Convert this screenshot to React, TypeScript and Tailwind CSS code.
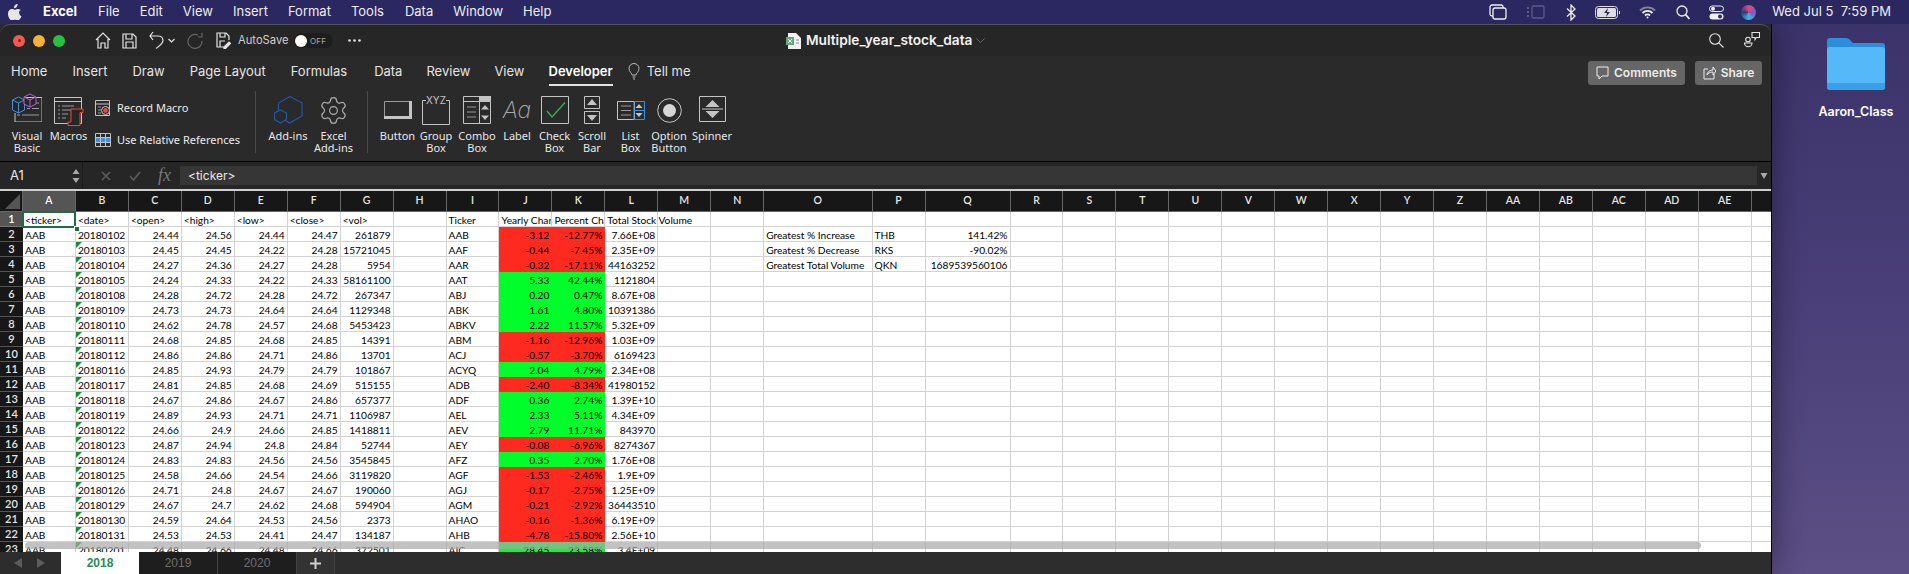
import React from "react";
import { Settings } from "lucide-react";

const UI = "font-['Inter','Liberation_Sans',sans-serif]";
const cols = [
  "A","B","C","D","E","F","G","H","I","J","K","L","M","N","O","P","Q","R","S","T","U","V","W","X","Y","Z","AA","AB","AC","AD","AE","",
];
const stock = `AAB|20180102|24.44|24.56|24.44|24.47|261879
AAB|20180103|24.45|24.45|24.22|24.28|15721045
AAB|20180104|24.27|24.36|24.27|24.28|5954
AAB|20180105|24.24|24.33|24.22|24.33|58161100
AAB|20180108|24.28|24.72|24.28|24.72|267347
AAB|20180109|24.73|24.73|24.64|24.64|1129348
AAB|20180110|24.62|24.78|24.57|24.68|5453423
AAB|20180111|24.68|24.85|24.68|24.85|14391
AAB|20180112|24.86|24.86|24.71|24.86|13701
AAB|20180116|24.85|24.93|24.79|24.79|101867
AAB|20180117|24.81|24.85|24.68|24.69|515155
AAB|20180118|24.67|24.86|24.67|24.86|657377
AAB|20180119|24.89|24.93|24.71|24.71|1106987
AAB|20180122|24.66|24.9|24.66|24.85|1418811
AAB|20180123|24.87|24.94|24.8|24.84|52744
AAB|20180124|24.83|24.83|24.56|24.56|3545845
AAB|20180125|24.58|24.66|24.54|24.66|3119820
AAB|20180126|24.71|24.8|24.67|24.67|190060
AAB|20180129|24.67|24.7|24.62|24.68|594904
AAB|20180130|24.59|24.64|24.53|24.56|2373
AAB|20180131|24.53|24.53|24.41|24.47|134187
AAB|20180201|24.48|24.66|24.48|24.66|372501`.split("\n").map((r) => r.split("|"));
const summary = `AAB|-3.12|-12.77%|7.66E+08
AAF|-0.44|-7.45%|2.35E+09
AAR|-0.32|-17.11%|44163252
AAT|5.33|42.44%|1121804
ABJ|0.20|0.47%|8.67E+08
ABK|1.61|4.80%|10391386
ABKV|2.22|11.57%|5.32E+09
ABM|-1.16|-12.96%|1.03E+09
ACJ|-0.57|-3.70%|6169423
ACYQ|2.04|4.79%|2.34E+08
ADB|-2.40|-8.34%|41980152
ADF|0.36|2.74%|1.39E+10
AEL|2.33|5.11%|4.34E+09
AEV|2.79|11.71%|843970
AEY|-0.08|-6.96%|8274367
AFZ|0.35|2.70%|1.76E+08
AGF|-1.53|-2.46%|1.9E+09
AGJ|-0.17|-2.75%|1.25E+09
AGM|-0.21|-2.92%|36443510
AHAO|-0.16|-1.36%|6.19E+09
AHB|-4.78|-15.80%|2.56E+10
AIC|28.45|23.58%|3.4E+09`.split("\n").map((r) => r.split("|"));
const extra: Record<number, string[]> = {
  0: ["Greatest % Increase", "THB", "141.42%"],
  1: ["Greatest % Decrease", "RKS", "-90.02%"],
  2: ["Greatest Total Volume", "QKN", "1689539560106"],
};

const Cell = ({ children, right, bg, visible }: { children?: React.ReactNode; right?: boolean; bg?: string; visible?: boolean }) => (
  <div
    className={`relative border-r border-b border-[#d2d2d2] px-[2px] leading-[16px] whitespace-nowrap ${visible ? "overflow-visible" : "overflow-hidden"} ${right ? "text-right" : "text-left"} ${bg ?? "bg-white"}`}
  >
    {children}
  </div>
);

function Sheet() {
  const rows: React.ReactNode[] = [];
  const first = ["<ticker>", "<date>", "<open>", "<high>", "<low>", "<close>", "<vol>", "", "Ticker", "Yearly Change", "Percent Change", "Total Stock Volume"];
  rows.push(
    <div key="r1" className="flex items-center justify-center border-b border-[#777] bg-[#555] text-[11px] font-semibold text-white">1</div>
  );
  first.forEach((t, i) =>
    rows.push(
      <Cell key={`h${i}`} visible={i === 11}>
        {i === 11 ? <span className="relative z-10">{t}</span> : t}
      </Cell>
    )
  );
  for (let i = first.length; i < cols.length; i++) rows.push(<Cell key={`h${i}`} />);
  for (let r = 0; r < 22; r++) {
    const s = stock[r];
    const m = summary[r];
    const neg = m[1].startsWith("-");
    const fill = neg ? "bg-[#ff2a1f]" : "bg-[#00ff2a]";
    rows.push(
      <div key={`rh${r}`} className="flex items-center justify-center border-b border-[#555] bg-[#171717] text-[11px] font-semibold text-[#e6e6e6]">{r + 2}</div>
    );
    rows.push(<Cell key={`a${r}`}>{s[0]}</Cell>);
    rows.push(
      <Cell key={`b${r}`}>
        {r > 0 && <span className="absolute left-0 top-0 h-0 w-0 border-t-[6px] border-r-[6px] border-t-[#0f8f3a] border-r-transparent" />}
        {s[1]}
      </Cell>
    );
    for (let c = 2; c < 7; c++) rows.push(<Cell key={`c${r}${c}`} right>{s[c]}</Cell>);
    rows.push(<Cell key={`h${r}`} />);
    rows.push(<Cell key={`i${r}`}>{m[0]}</Cell>);
    rows.push(<Cell key={`j${r}`} right bg={`${fill} border-r-transparent border-b-transparent`}>{m[1]}</Cell>);
    rows.push(<Cell key={`k${r}`} right bg={`${fill} border-r-transparent border-b-transparent`}>{m[2]}</Cell>);
    rows.push(<Cell key={`l${r}`} right>{m[3]}</Cell>);
    rows.push(<Cell key={`m${r}`} />);
    rows.push(<Cell key={`n${r}`} />);
    const e = extra[r];
    rows.push(<Cell key={`o${r}`}>{e?.[0]}</Cell>);
    rows.push(<Cell key={`p${r}`}>{e?.[1]}</Cell>);
    rows.push(<Cell key={`q${r}`} right>{e?.[2]}</Cell>);
    for (let c = 17; c < cols.length; c++) rows.push(<Cell key={`x${r}${c}`} />);
  }
  return (
    <div className="relative h-[361px] overflow-hidden bg-white">
      <div className="grid grid-cols-[23px_repeat(14,52.95px)_108.4px_53px_85px_repeat(14,52.95px)_20px] grid-rows-[21px_repeat(23,15px)] font-['Lato','Liberation_Sans',sans-serif] text-[10.2px] text-black">
        <div className="relative border-r border-b border-[#666] bg-[#171717]">
          <span className="absolute bottom-[2px] right-[2px] h-0 w-0 border-b-[15px] border-l-[15px] border-b-[#555] border-l-transparent" />
        </div>
        {cols.map((c, i) => (
          <div
            key={i}
            className={`flex items-center justify-center border-r border-b border-[#666] text-[10.5px] font-semibold ${i === 0 ? "bg-[#555] text-white" : "bg-[#171717] text-[#e6e6e6]"}`}
          >
            {c}
          </div>
        ))}
        {rows}
      </div>
      {/* selected cell */}
      <div className="absolute left-[22px] top-[20px] h-[17px] w-[54px] border-2 border-[#1f6b42]" />
      <div className="absolute left-[74px] top-[35px] h-[6px] w-[6px] border border-white bg-[#1f6b42]" />
      {/* scrollbar */}
      <div className="absolute left-[25px] top-[351px] h-[7px] w-[1676px] rounded-full bg-[#a8a8a8]/70" />
    </div>
  );
}

const Ico = ({ children, w = 30, h = 30, className = "" }: { children: React.ReactNode; w?: number; h?: number; className?: string }) => (
  <svg width={w} height={h} viewBox={`0 0 ${w} ${h}`} fill="none" stroke="currentColor" className={className}>
    {children}
  </svg>
);

const RibbonItem = ({ w, label, icon }: { w: string; label: React.ReactNode; icon: React.ReactNode }) => (
  <div className={`flex shrink-0 flex-col items-center ${w}`}>
    <div className="flex h-[45px] items-center justify-center pt-[5px]">{icon}</div>
    <div className="text-center text-[11px] leading-[12px] text-[#e8e8e8]">{label}</div>
  </div>
);

const Sep = () => <div className="mx-[10px] mt-[6px] h-[62px] w-px shrink-0 bg-[#4a4a4a]" />;

function Ribbon() {
  const c = "#c4c4c4";
  return (
    <div className="flex h-[76px] pl-[5px] text-[#d0d0d0]">
      <RibbonItem
        w="w-[44px]"
        label={<>Visual<br />Basic</>}
        icon={
          <Ico h={29} className="-mt-[5px]">
            <path d="M13 4.500h17v24.500H3V20" stroke={c} />
            <path d="M15 10h12M15 15.500h3M20 15.500h7M5 22h3M10 22h17" stroke="#9c9c9c" />
            <path d="M.5 7l6-3 6 3v10l-6 3-6-3zM.5 7l6 3 6-3M6.500 10v10" stroke="#3f8fe0" fill="#262626" />
            <path d="M12 4l6-3 6 3v7l-6 3-6-3zM12 4l6 3 6-3M18 7v7" stroke="#b45fd0" fill="#262626" />
          </Ico>
        }
      />
      <RibbonItem
        w="w-[39px]"
        label="Macros"
        icon={
          <Ico h={29} className="mt-[3px]">
            <path d="M.5.500h27v26H.500zM.500 4.500h27" stroke={c} />
            <path d="M4 9h2M8 9h12M4 13h2M8 13h10M4 17h2M8 17h6M4 21h2M8 21h4" stroke="#9a9a9a" />
            <path d="M17 12h12v3.500h-3V28.500H14v-3.500h3z" stroke="#e5483f" fill="#262626" />
          </Ico>
        }
      />
      <div className="ml-[7px] flex w-[150px] shrink-0 flex-col gap-[16px] pt-[15px] text-[11px] text-[#ececec]">
        <div className="flex h-[16px] items-center gap-[6px]">
          <Ico w={16} h={16}>
            <path d="M.5.500h14v15H.500zM.500 4h14" stroke={c} />
            <path d="M3 7h3M3 10h3M3 13h3" stroke="#999" />
            <circle cx="10.500" cy="10.500" r="4" stroke={c} fill="#262626" />
            <circle cx="10.500" cy="10.500" r="2.400" fill="#e5483f" stroke="none" />
          </Ico>
          <span>Record Macro</span>
        </div>
        <div className="flex h-[16px] items-center gap-[6px]">
          <Ico w={16} h={16}>
            <path d="M1 6h14v4.500H1z" fill="#3f8fe0" stroke="none" />
            <path d="M.5 1.500h15v13H.500zM5.500 1.500v13M10.500 1.500v13M.500 5.500h15M.500 10.500h15" stroke={c} />
          </Ico>
          <span>Use Relative References</span>
        </div>
      </div>
      <Sep />
      <RibbonItem
        w="w-[44px]"
        label="Add-ins"
        icon={
          <Ico w={29} h={28}>
            <path d="M11 24l4.500 3L28 20V7L16 .500 4.500 7v7" stroke="#2457a8" strokeWidth="1.200" />
            <path d="M6.500 14l6 3v6.500l-6 3.500-6-3.500V17z" stroke="#2457a8" strokeWidth="1.200" />
          </Ico>
        }
      />
      <RibbonItem
        w="w-[47px]"
        label={<>Excel<br />Add-ins</>}
        icon={<Settings size={31} strokeWidth={0.9} color="#b0b0b0" />}
      />
      <Sep />
      <RibbonItem
        w="w-[39px]"
        label="Button"
        icon={
          <Ico w={28} h={18}>
            <path d="M.5.500h26M.500.500v16" stroke="#9a9a9a" />
            <path d="M26.500 0v18M0 16.500h28" stroke={c} strokeWidth="3" />
          </Ico>
        }
      />
      <RibbonItem
        w="w-[38px]"
        label={<>Group<br />Box</>}
        icon={
          <Ico w={28} h={29}>
            <path d="M4 4.500H.500v24h27v-24H24" stroke={c} />
            <text x="14" y="8" textAnchor="middle" fontSize="10" fill={c} stroke="none" fontFamily="Inter">XYZ</text>
          </Ico>
        }
      />
      <RibbonItem
        w="w-[44px]"
        label={<>Combo<br />Box</>}
        icon={
          <Ico w={28} h={28}>
            <path d="M.5.500h27v27H.500zM.500 5.500h27M16.500 5.500v22" stroke={c} />
            <path d="M16 0h12v6H16z" fill={c} stroke="none" />
            <path d="M4 11h9M4 16h9M4 21h9" stroke="#999" />
            <path d="M22 9l4 4.500h-8zM22 24l-4-4.500h8z" fill={c} stroke="none" />
          </Ico>
        }
      />
      <RibbonItem
        w="w-[36px]"
        label="Label"
        icon={<span className={`${UI} text-[23px] font-extralight italic leading-[26px] text-[#a8a8a8]`}>Aa</span>}
      />
      <RibbonItem
        w="w-[39px]"
        label={<>Check<br />Box</>}
        icon={
          <Ico w={28} h={28}>
            <path d="M.5.500h27v27H.500z" stroke={c} />
            <path d="M6 15l5 6L24 6.500" stroke="#39b54a" strokeWidth="1.200" />
          </Ico>
        }
      />
      <RibbonItem
        w="w-[36px]"
        label={<>Scroll<br />Bar</>}
        icon={
          <Ico w={16} h={28}>
            <path d="M.5.500h15v12H.500zM.500 15.500h15v12H.500z" stroke={c} />
            <path d="M8 3l5 6H3zM8 25l-5-6h10z" fill={c} stroke="none" />
          </Ico>
        }
      />
      <RibbonItem
        w="w-[41px]"
        label={<>List<br />Box</>}
        icon={
          <Ico w={28} h={19}>
            <path d="M.5.500h17v18H.500z" stroke={c} />
            <path d="M4 5h10M4 9.500h10M4 14h10" stroke="#999" />
            <path d="M17 .500h10.500v18H17zM17 9.500h10.500" stroke="#3f8fe0" />
            <path d="M22 3l3.500 4h-7zM22 16l-3.500-4h7z" fill={c} stroke="none" />
          </Ico>
        }
      />
      <RibbonItem
        w="w-[36px]"
        label={<>Option<br />Button</>}
        icon={
          <Ico w={25} h={25}>
            <circle cx="12.500" cy="12.500" r="11.800" stroke={c} />
            <circle cx="12.500" cy="12.500" r="6.500" fill="#d6d6d6" stroke="none" />
          </Ico>
        }
      />
      <RibbonItem
        w="w-[50px]"
        label="Spinner"
        icon={
          <Ico w={27} h={26} className="-mt-[2px]">
            <path d="M.5.500h26v25H.500z" stroke={c} />
            <path d="M13.500 4l7 7h-14zM13.500 22l-7-7h14z" fill={c} stroke="none" />
            <path d="M3 13h21" stroke={c} />
          </Ico>
        }
      />
    </div>
  );
}

function TitleBar() {
  return (
    <div className="relative flex h-[32px] items-center rounded-t-[10px] border-t border-[#555] bg-[#262626] text-[#e4e4e4]">
      <div className="ml-[13px] flex gap-[8px]">
        <span className="flex h-[12px] w-[12px] items-center justify-center rounded-full bg-[#f25a50]">
          <span className="h-[3px] w-[3px] rounded-full bg-[#8a1f18]" />
        </span>
        <span className="h-[12px] w-[12px] rounded-full bg-[#f9b22f]" />
        <span className="h-[12px] w-[12px] rounded-full bg-[#26c244]" />
      </div>
      <div className="ml-[30px] flex items-center">
        <svg width="16" height="17" viewBox="0 0 16 17" fill="none" stroke="currentColor" strokeWidth="1.200"><path d="M1 8l7-7 7 7M3 7v9h3v-5h4v5h3V7" /></svg>
        <svg className="ml-[11px]" width="15" height="16" viewBox="0 0 15 16" fill="none" stroke="currentColor" strokeWidth="1.200"><path d="M1 1h10l3 3v11H1zM4 1v5h6V1M4 15V9h7v6" /></svg>
        <svg className="ml-[12px]" width="15" height="19" viewBox="0 0 15 19" fill="none" stroke="currentColor" strokeWidth="1.200"><path d="M1 5h8c3 0 5 2 5 4.500 0 3-3 5-7 8M4 1L1 5l3 4" /></svg>
        <svg className="ml-[4px]" width="7" height="5" viewBox="0 0 7 5" fill="none" stroke="currentColor" strokeWidth="1.200"><path d="M.5 1l3 3 3-3" /></svg>
        <svg className="ml-[11px] text-[#666]" width="17" height="17" viewBox="0 0 17 17" fill="none" stroke="currentColor" strokeWidth="1.200"><path d="M12 3a7 7 0 1 0 4 6M16 1v4h-4" /></svg>
        <svg className="ml-[13px]" width="15" height="17" viewBox="0 0 15 17" fill="none" stroke="currentColor" strokeWidth="1.200"><path d="M8 15H1V1h9l3 3v4M4 1v4h5V1M4 15V9h5" /><path d="M8 15l5-5 1.500 1.500-5 5H8z" fill="currentColor" /></svg>
        <span className={`ml-[7px] w-[50px] whitespace-nowrap text-[11.2px] text-[#cfcfcf] ${UI}`}>AutoSave</span>
        <span className="ml-[6px] flex h-[15px] w-[39px] items-center rounded-full bg-[#1d1d1d]">
          <span className="ml-[1px] h-[12px] w-[12px] rounded-full bg-white" />
          <span className={`ml-[3px] text-[8px] tracking-wide text-[#aaa] ${UI}`}>OFF</span>
        </span>
        <svg className="ml-[15px]" width="13" height="3" viewBox="0 0 13 3" fill="currentColor"><circle cx="1.500" cy="1.500" r="1.300" /><circle cx="6.500" cy="1.500" r="1.300" /><circle cx="11.500" cy="1.500" r="1.300" /></svg>
      </div>
      <div className="absolute left-[786px] top-0 flex h-full items-center">
        <svg width="15" height="16" viewBox="0 0 15 16">
          <path d="M2 0h8l5 5v11H2z" fill="#f2f2f2" />
          <path d="M0 4h8v8H0z" fill="#5fa87a" />
          <path d="M2 6l4 4M6 6l-4 4" stroke="#fff" />
          <path d="M10 7h3M10 10h3" stroke="#888" />
        </svg>
        <span className={`ml-[5px] text-[13.7px] font-semibold text-[#f2f2f2] ${UI}`}>Multiple_year_stock_data</span>
        <svg className="ml-[4px]" width="9" height="5" viewBox="0 0 9 5" fill="none" stroke="#666"><path d="M.5.500l4 4 4-4" /></svg>
      </div>
      <div className="ml-auto mr-[11px] flex items-center gap-[20px]">
        <svg width="15" height="15" viewBox="0 0 15 15" fill="none" stroke="currentColor" strokeWidth="1.100"><circle cx="6" cy="6" r="5.300" /><path d="M9.800 9.800L14.500 14.500" /></svg>
        <svg width="16" height="17" viewBox="0 0 16 17" fill="none" stroke="currentColor" strokeWidth="1.100">
          <circle cx="4" cy="7.500" r="2.300" />
          <path d="M.5 11h7.500a3.700 3.700 0 0 1-7.500 0zM8 .500h7.500v5h-3l-1.500 2v-2H8z" />
        </svg>
      </div>
    </div>
  );
}

function Tabs() {
  const names = ["Home", "Insert", "Draw", "Page Layout", "Formulas", "Data", "Review", "View"];
  const ml = ["ml-0", "ml-[25px]", "ml-[25px]", "ml-[25px]", "ml-[25px]", "ml-[27px]", "ml-[24px]", "ml-[24px]"];
  return (
    <div className={`flex h-[29px] items-start pl-[11px] pt-[6px] text-[13px] text-[#e4e4e4] ${UI}`}>
      {names.map((n, i) => (
        <span key={n} className={ml[i]}>{n}</span>
      ))}
      <span className="relative ml-[24px] font-semibold text-white">
        Developer
        <span className="absolute -bottom-[4px] left-0 h-[2px] w-full bg-[#e4e4e4]" />
      </span>
      <svg className="ml-[15px] mt-[1px]" width="12" height="17" viewBox="0 0 12 17" fill="none" stroke="#bbb"><path d="M4 12c0-2-3-3-3-6.500a5 5 0 0 1 10 0C11 9 8 10 8 12zM4.500 14h3M5 16h2" /></svg>
      <span className="ml-[7px]">Tell me</span>
      <div className="ml-auto mr-[9px] -mt-[1px] flex gap-[10px] text-[12px] font-semibold text-[#ececec]">
        <span className="flex h-[24px] w-[97px] items-center justify-center gap-[5px] rounded-[3px] bg-[#666]">
          <svg width="13" height="14" viewBox="0 0 13 14" fill="none" stroke="currentColor"><path d="M1 1h11v9H6l-3 3v-3H1z" /></svg>
          Comments
        </span>
        <span className="flex h-[24px] w-[67px] items-center justify-center gap-[5px] rounded-[3px] bg-[#666]">
          <svg width="13" height="14" viewBox="0 0 13 14" fill="none" stroke="currentColor"><path d="M5 3H1v10h10V8M4 9c0-3 3-5 6-5V1l3 4-3 4V6C7 6 5 7 4 9z" /></svg>
          Share
        </span>
      </div>
    </div>
  );
}

function FormulaBar() {
  return (
    <div className="flex h-[27px] items-center bg-[#262626] text-[#e8e8e8]">
      <span className={`ml-[10px] w-[62px] text-[13px] ${UI}`}>A1</span>
      <svg width="8" height="20" viewBox="0 0 8 20" fill="#aaa"><path d="M4 3l3.500 5H.500zM4 17L.500 12h7z" /></svg>
      <div className="ml-[2px] h-[27px] w-px bg-[#1a1a1a]" />
      <svg className="ml-[18px]" width="10" height="10" viewBox="0 0 10 10" fill="none" stroke="#5c5c5c" strokeWidth="1.600"><path d="M1 1l8 8M9 1L1 9" /></svg>
      <svg className="ml-[18px]" width="12" height="10" viewBox="0 0 12 10" fill="none" stroke="#5c5c5c" strokeWidth="1.600"><path d="M1 5l3.500 4L11 1" /></svg>
      <span className="ml-[17px] w-[13px] font-['Liberation_Serif',serif] text-[18px] italic text-[#777]">fx</span>
      <div className={`ml-[9px] flex h-[19px] w-[1577px] items-center bg-[#363636] pl-[8px] text-[12px] ${UI}`}>&lt;ticker&gt;</div>
      <svg className="ml-[3px]" width="8" height="8" viewBox="0 0 8 8" fill="#aaa"><path d="M.5 1h7L4 7z" /></svg>
    </div>
  );
}

function SheetTabs() {
  const F = "font-['Liberation_Sans',sans-serif]";
  return (
    <div className={`flex h-[22px] bg-[#2d2d2d] ${F}`}>
      <div className="flex w-[61px] items-center gap-[15px] pl-[14px]">
        <svg width="8" height="10" viewBox="0 0 8 10" fill="#5c5c5c"><path d="M8 0v10L0 5z" /></svg>
        <svg width="8" height="10" viewBox="0 0 8 10" fill="#5c5c5c"><path d="M0 0v10l8-5z" /></svg>
      </div>
      <div className="flex w-[78px] items-center justify-center bg-white text-[12px] font-bold text-[#2b8a57]">2018</div>
      <div className="flex w-[79px] items-center justify-center border-r border-[#444] bg-[#1e1e1e] text-[12px] text-[#6e6e6e]">2019</div>
      <div className="flex w-[79px] items-center justify-center border-r border-[#444] bg-[#1e1e1e] text-[12px] text-[#6e6e6e]">2020</div>
      <div className="flex w-[38px] items-center justify-center border-r border-[#444] bg-[#333]">
        <svg width="11" height="11" viewBox="0 0 11 11" stroke="#d0d0d0" strokeWidth="2"><path d="M5.500 0v11M0 5.500h11" /></svg>
      </div>
    </div>
  );
}

function MenuBar() {
  const items = [
    ["File", "ml-[21px]"],
    ["Edit", "ml-[20px]"],
    ["View", "ml-[20px]"],
    ["Insert", "ml-[20px]"],
    ["Format", "ml-[20px]"],
    ["Tools", "ml-[20px]"],
    ["Data", "ml-[21px]"],
    ["Window", "ml-[20px]"],
    ["Help", "ml-[20px]"],
  ];
  return (
    <div className={`relative z-20 flex h-[24px] items-center bg-[#2b2761] text-[13px] text-[#eeeeee] ${UI}`}>
      <svg className="ml-[8px]" width="14" height="16" viewBox="0 0 14 16" fill="#e6e6e6">
        <path d="M9.600 0c.1 1.200-.4 2.300-1 3-.7.800-1.700 1.300-2.700 1.200-.1-1.100.4-2.300 1-3C7.600.500 8.700 0 9.600 0zM13 5.400c-.1.100-1.900 1.100-1.900 3.300 0 2.500 2.300 3.400 2.400 3.400 0 .1-.4 1.200-1.200 2.400-.7 1-1.500 2-2.600 2-1.200 0-1.500-.7-2.900-.7s-1.800.7-2.900.7c-1.100 0-1.900-1-2.600-2C.4 13 0 10.900 0 9.500c0-3 2-4.500 3.900-4.500 1.100 0 2 .7 2.800.7.700 0 1.800-.8 3-.8.500 0 2.200.1 3.300 1.500z" />
      </svg>
      <span className="ml-[21px] font-bold text-white">Excel</span>
      {items.map(([t, m]) => (
        <span key={t} className={m}>{t}</span>
      ))}
      <div className="ml-auto flex items-center">
        <svg width="18" height="16" viewBox="0 0 18 16" fill="none" stroke="#eee" strokeWidth="1.300"><rect x="1" y="1" width="13" height="11" rx="2" /><rect x="4" y="4" width="13" height="11" rx="2" fill="#2b2761" /></svg>
        <svg className="ml-[20px]" width="18" height="14" viewBox="0 0 18 14" fill="none" stroke="#5d5a88" strokeWidth="1.300"><rect x="5" y="1" width="12" height="12" rx="1.500" /><path d="M1 2v2M1 6v2M1 10v2" strokeWidth="2" /></svg>
        <svg className="ml-[21px]" width="10" height="17" viewBox="0 0 10 17" fill="none" stroke="#eee" strokeWidth="1.300"><path d="M1 4.500l8 7.500-4 4V1l4 4-8 7.500" /></svg>
        <svg className="ml-[19px]" width="26" height="13" viewBox="0 0 26 13" fill="none" stroke="#ddd"><rect x=".5" y=".5" width="22" height="12" rx="3" /><rect x="2" y="2" width="19" height="9" rx="1.500" fill="#ddd" stroke="none" /><path d="M13 2l-4 5h3l-1 4 4-5h-3z" fill="#2b2761" stroke="none" /><path d="M24.500 5v3" /></svg>
        <svg className="ml-[18px]" width="17" height="13" viewBox="0 0 17 13" fill="none" strokeWidth="1.800"><path d="M1 4.500a10.500 10.500 0 0 1 15 0" stroke="#888" /><path d="M3.500 7a7 7 0 0 1 10 0" stroke="#eee" /><path d="M6 9.500a3.500 3.500 0 0 1 5 0" stroke="#eee" /><circle cx="8.500" cy="11.500" r="1" fill="#eee" stroke="none" /></svg>
        <svg className="ml-[20px]" width="14" height="15" viewBox="0 0 14 15" fill="none" stroke="#eee" strokeWidth="1.300"><circle cx="6" cy="6" r="5" /><path d="M9.500 9.500L13.500 14" strokeWidth="1.800" /></svg>
        <svg className="ml-[19px]" width="15" height="15" viewBox="0 0 15 15"><rect x=".5" y="1" width="14" height="5.500" rx="2.700" fill="none" stroke="#eee" /><circle cx="4" cy="3.700" r="2" fill="#eee" /><rect x=".5" y="8.500" width="14" height="6" rx="3" fill="#eee" /><circle cx="11" cy="11.500" r="2" fill="#2b2761" /></svg>
        <span className="ml-[17px] h-[15px] w-[15px] rounded-full bg-[conic-gradient(#e0487a,#7a5ad0,#3fb8d8,#2a3f80,#e0487a)]" />
        <span className="ml-[16px] mr-[18px] whitespace-pre text-[13px]">Wed Jul 5  7:59 PM</span>
      </div>
    </div>
  );
}

export default function App() {
  return (
    <div className="flex h-[574px] w-[1909px] flex-col overflow-hidden bg-[#3f3670]">
      <MenuBar />
      <div className="flex min-h-0 flex-1 bg-gradient-to-b from-[#3b336a] via-[#4a3f78] to-[#5c4f86]">
        <div className="relative z-10 flex w-[1772px] shrink-0 flex-col border-r border-black bg-[#2a2a2a] shadow-[0_0_30px_rgba(0,0,0,0.45)]">
          <TitleBar />
          <Tabs />
          <Ribbon />
          <div className="h-px bg-black" />
          <FormulaBar />
          <div className="h-[2px] bg-[#cfcfcf]" />
          <Sheet />
          <SheetTabs />
        </div>
        <div className="flex flex-1 flex-col items-center pl-[31px] pt-[14px]">
          <svg width="58" height="52" viewBox="0 0 58 52">
            <path d="M3 0h16c2 0 3 1 4 2l3 3h29c2 0 3 1 3 3v41c0 2-1 3-3 3H3c-2 0-3-1-3-3V3c0-2 1-3 3-3z" fill="#2a8fdc" />
            <path d="M3 9h52c2 0 3 1 3 3v34H0V12c0-2 1-3 3-3z" fill="#55b8f8" />
            <path d="M0 45h58v4c0 2-1 3-3 3H3c-2 0-3-1-3-3z" fill="#3a9fe6" />
          </svg>
          <span className={`mt-[13px] whitespace-nowrap text-[12.5px] font-semibold text-white ${UI}`}>Aaron_Class</span>
        </div>
      </div>
    </div>
  );
}
